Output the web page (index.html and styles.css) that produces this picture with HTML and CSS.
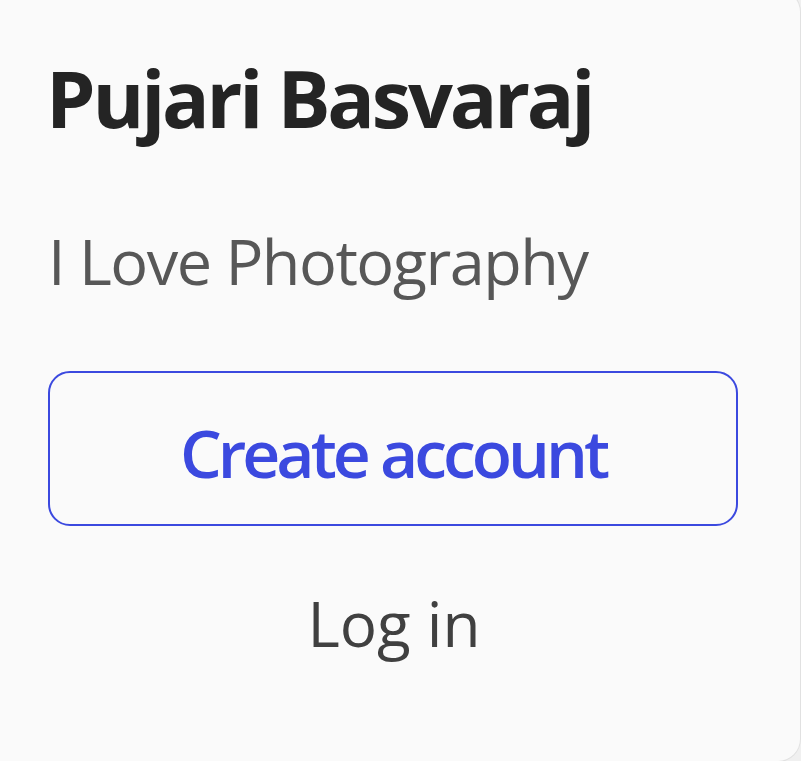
FILE: index.html
```html
<!DOCTYPE html>
<html>
<head>
<meta charset="utf-8">
<link rel="stylesheet" href="styles.css">
</head>
<body>
<div class="card">
  <h1 class="name">Pujari Basvaraj</h1>
  <p class="tagline">I Love Photography</p>
  <div class="actions">
    <a class="btn-create" href="#">Create account</a>
    <a class="btn-login" href="#">Log in</a>
  </div>
</div>
</body>
</html>
```
FILE: styles.css
```css
html, body {
  margin: 0;
  padding: 0;
  background: #f0f0f0;
  overflow: hidden;
}
.card {
  box-sizing: border-box;
  width: 800px;
  height: 771px;
  margin-top: -10px;
  background: #fafafa;
  border-radius: 0 22px 22px 0;
  box-shadow: 0 0 0 1px rgba(0,0,0,0.06);
  padding: 10px 62px 0 50px;
  font-family: "Open Sans", "Noto Sans", sans-serif;
}
.name {
  margin: 0 0 0 -4px;
  padding-top: 48px;
  font-size: 79px;
  line-height: 100px;
  font-weight: 700;
  letter-spacing: -3.2px;
  color: #242424;
}
.tagline {
  margin: 73px 0 0 -2px;
  font-size: 63px;
  line-height: 80px;
  letter-spacing: -1.5px;
  color: #575757;
}
.actions {
  display: flex;
  flex-direction: column;
  margin-top: 70px;
  gap: 57px;
}
.btn-create {
  box-sizing: border-box;
  height: 155px;
  margin-left: -2px;
  padding-top: 6px;
  display: flex;
  align-items: center;
  justify-content: center;
  border: 2px solid #3b49df;
  border-radius: 22px;
  color: #3b49df;
  font-size: 66px;
  font-weight: 600;
  letter-spacing: -4px;
  text-decoration: none;
}
.btn-login {
  display: flex;
  justify-content: center;
  color: #404040;
  font-size: 62px;
  line-height: 80px;
  text-decoration: none;
}
```
